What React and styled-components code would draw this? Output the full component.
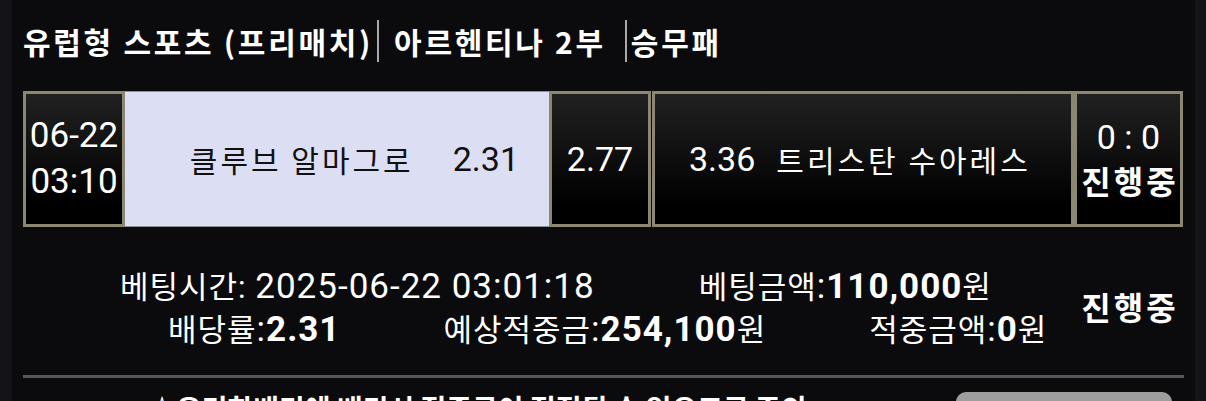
import React from "react";
import styled, { createGlobalStyle } from "styled-components";

const GlobalStyle = createGlobalStyle`
  html, body {
    margin: 0;
    padding: 0;
    background: #141418;
  }
  body {
    font-family: Roboto, "Noto Sans CJK KR", sans-serif;
    color: #fff;
  }
`;

const Page = styled.div`
  width: 1206px;
  height: 401px;
  overflow: hidden;
  padding: 0 11px 0 12px;
  box-sizing: border-box;
`;

const Panel = styled.div`
  background: #0b0b0e;
  height: 100%;
  padding: 20px 12px 0 11px;
  box-sizing: border-box;
`;

const Title = styled.h1`
  margin: 0 0 29px;
  font-family: "Noto Sans CJK KR", sans-serif;
  font-size: 30px;
  font-weight: 700;
  letter-spacing: 2.7px;
  line-height: 40px;
  display: flex;
  align-items: center;
  white-space: pre;
`;

const TitleBar = styled.span`
  display: inline-block;
  flex: none;
  width: 2px;
  height: 42px;
  background: #a9a9a9;
  margin: 0 ${(p) => p.$right}px 0 ${(p) => p.$left}px;
`;

const MatchRow = styled.div`
  display: flex;
  height: 136px;
`;

const Cell = styled.div`
  box-sizing: border-box;
  width: ${(p) => p.$w}px;
  margin-left: ${(p) => p.$gap || 0}px;
  border: 3px solid #8b8770;
  background: linear-gradient(#212121, #000 85%);
  display: flex;
  flex-direction: ${(p) => (p.$row ? "row" : "column")};
  align-items: center;
  justify-content: ${(p) => p.$justify || "center"};
  gap: ${(p) => p.$spacing || 0}px;
  padding: ${(p) => p.$pad || "0"};
`;

const HomeCell = styled.div`
  box-sizing: border-box;
  width: 424px;
  border-top: 1px solid #8e8e96;
  border-bottom: 1px solid #8e8e96;
  background: #dcdff3;
  color: #111;
  display: flex;
  align-items: center;
  justify-content: flex-end;
  gap: 39px;
  padding-right: 30px;
`;

const DateLine = styled.div`
  font-size: 35px;
  line-height: 46px;
`;

const TeamName = styled.span`
  font-family: "Noto Sans CJK KR", sans-serif;
  font-size: 30px;
  letter-spacing: 3px;
  line-height: 40px;
  white-space: nowrap;
`;

const Odd = styled.span`
  font-family: Roboto, sans-serif;
  font-size: 34px;
  line-height: 40px;
`;

const Score = styled.div`
  font-size: 34px;
  line-height: 43px;
  white-space: pre;
`;

const Status = styled.div`
  font-family: "Noto Sans CJK KR", sans-serif;
  font-size: 32px;
  font-weight: 700;
  letter-spacing: 3px;
  text-indent: 3px;
  line-height: 43px;
`;

const Info = styled.div`
  display: flex;
  align-items: center;
  margin-top: 36px;
`;

const InfoLines = styled.div`
  width: 1051px;
`;

const InfoLine = styled.div`
  display: flex;
  gap: ${(p) => p.$gap}px;
  padding-left: ${(p) => p.$indent}px;
  height: 43px;
  align-items: center;
  font-size: 31px;
  letter-spacing: 1px;
  white-space: nowrap;
`;

const Num = styled.span`
  font-family: Roboto, sans-serif;
  font-size: 35px;
  font-weight: ${(p) => (p.$bold ? 700 : 400)};
`;

const InfoStatus = styled(Status)`
  width: 109px;
  text-align: center;
`;

const Rule = styled.hr`
  margin: 26px 0 0;
  border: 0;
  height: 3px;
  width: 1161px;
  background: #58585a;
`;

const Footer = styled.div`
  display: flex;
  align-items: flex-start;
  margin-top: 14px;
`;

const Notice = styled.p`
  margin: 0 0 0 125px;
  font-family: "Noto Sans CJK KR", sans-serif;
  font-size: 28px;
  font-weight: 700;
  line-height: 20px;
  padding-top: 6px;
  white-space: nowrap;
`;

const GreyButton = styled.div`
  margin-left: auto;
  margin-right: 11px;
  width: 216px;
  height: 40px;
  border-radius: 10px;
  background: #9d9d9d;
`;

export default function App() {
  return (
    <>
      <GlobalStyle />
      <Page>
        <Panel>
          <Title>
            유럽형 스포츠 (프리매치)
            <TitleBar $left={4} $right={15} />
            아르헨티나 2부
            <TitleBar $left={19} $right={4} />
            승무패
          </Title>

          <MatchRow>
            <Cell $w={102}>
              <DateLine>06-22</DateLine>
              <DateLine>03:10</DateLine>
            </Cell>
            <HomeCell>
              <TeamName>클루브 알마그로</TeamName>
              <Odd>2.31</Odd>
            </HomeCell>
            <Cell $w={102}>
              <Odd>2.77</Odd>
            </Cell>
            <Cell $w={422} $gap={1} $row $justify="flex-start" $spacing={21} $pad="0 0 0 34px">
              <Odd>3.36</Odd>
              <TeamName>트리스탄 수아레스</TeamName>
            </Cell>
            <Cell $w={109}>
              <Score>0 : 0</Score>
              <Status>진행중</Status>
            </Cell>
          </MatchRow>

          <Info>
            <InfoLines>
              <InfoLine $indent={97} $gap={104}>
                <span>
                  베팅시간: <Num>2025-06-22 03:01:18</Num>
                </span>
                <span>
                  베팅금액<Num>:</Num>
                  <Num $bold>110,000</Num>원
                </span>
              </InfoLine>
              <InfoLine $indent={145} $gap={103}>
                <span>
                  배당률<Num>:</Num>
                  <Num $bold>2.31</Num>
                </span>
                <span>
                  예상적중금<Num>:</Num>
                  <Num $bold>254,100</Num>원
                </span>
                <span>
                  적중금액<Num>:</Num>
                  <Num $bold>0</Num>원
                </span>
              </InfoLine>
            </InfoLines>
            <InfoStatus>진행중</InfoStatus>
          </Info>

          <Rule />

          <Footer>
            <Notice>☆유리한배팅에 배팅시 적중금이 정정될 수 있으므로 주의</Notice>
            <GreyButton />
          </Footer>
        </Panel>
      </Page>
    </>
  );
}
